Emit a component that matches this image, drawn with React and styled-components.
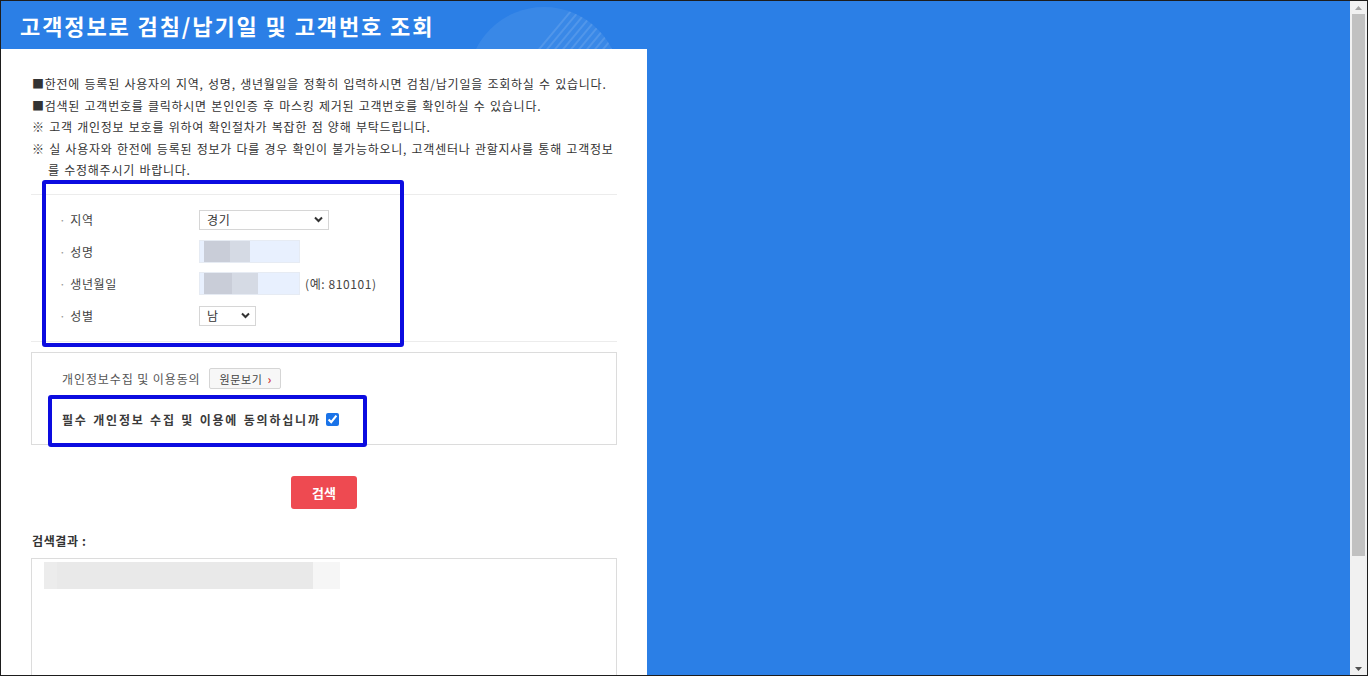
import React from 'react';
import styled, { createGlobalStyle } from 'styled-components';

const Global = createGlobalStyle`
  html, body {
    margin: 0;
    padding: 0;
    overflow: hidden;
  }
  body {
    font-family: "Noto Sans CJK KR", "Noto Sans", sans-serif;
  }
`;

const Frame = styled.div`
  display: flex;
  width: 1368px;
  height: 676px;
  box-sizing: border-box;
  border: 1px solid #1d1d1d;
  background: #2b7fe6;
  overflow: hidden;
`;

const Main = styled.div`
  flex: 1;
  display: flex;
  flex-direction: column;
  min-width: 0;
`;

const Header = styled.header`
  position: relative;
  flex-shrink: 0;
  width: 646px;
  height: 48px;
  display: flex;
  align-items: center;
  padding-left: 19px;
  box-sizing: border-box;
  overflow: hidden;
`;

const Title = styled.h1`
  margin: 0;
  color: #fff;
  font-size: 22px;
  font-weight: 700;
  letter-spacing: 1.9px;
  position: relative;
  z-index: 1;
`;

const Deco = styled.svg`
  position: absolute;
  left: 465px;
  top: 4px;
`;

const Panel = styled.div`
  position: relative;
  width: 646px;
  flex: 1;
  background: #fff;
  padding: 24px 30px 0 30px;
  box-sizing: border-box;
  color: #333;
`;

const Notice = styled.ul`
  list-style: none;
  margin: 0;
  padding: 0 0 0 1px;
  font-size: 12px;
  line-height: 21.5px;
  letter-spacing: 0.75px;
  word-spacing: 1px;
  color: #333;
`;

const NoticeItem = styled.li`
  padding-left: ${({ $mark }) => ($mark === '※' ? '16px' : '0')};
  text-indent: ${({ $mark }) => ($mark === '※' ? '-16px' : '0')};
`;

const Divider = styled.div`
  height: 1px;
  background: #ececec;
  margin-top: ${({ $top }) => $top}px;
`;

const Form = styled.div`
  display: flex;
  flex-direction: column;
  padding: 9px 0 9px 28px;
`;

const Row = styled.div`
  display: grid;
  grid-template-columns: 140px auto;
  align-items: center;
  height: 32px;
  font-size: 12px;
  letter-spacing: 0.6px;
  color: #444;
`;

const Label = styled.span`
  &::before {
    content: '·';
    color: #999;
    margin-right: 4px;
  }
`;

const Field = styled.div`
  display: flex;
  align-items: center;
  gap: 5px;
`;

const SelectWrap = styled.div`
  position: relative;
  width: ${({ $w }) => $w}px;
  height: 20px;
  box-sizing: border-box;
  border: 1px solid #d6d6d6;
  background: #fff;
  display: flex;
  align-items: center;
  padding-left: 7px;
  font-size: 12px;
  color: #333;
  svg {
    position: absolute;
    right: 5px;
    top: 5px;
  }
`;

const MaskedInput = styled.div`
  width: 101px;
  height: 23px;
  box-sizing: border-box;
  border: 1px solid #e6ebf3;
  background: ${({ $a, $b }) => `linear-gradient(to right,
    #e8f0fe 0 4px,
    #c9cdd8 4px ${$a}px,
    #d5dae4 ${$a}px ${$b}px,
    #e8f0fe ${$b}px 100%)`};
`;

const Hint = styled.span`
  font-size: 12px;
  color: #444;
`;

const ConsentBox = styled.div`
  margin-top: 10px;
  border: 1px solid #dcdcdc;
  height: 93px;
  box-sizing: border-box;
  padding: 15px 0 0 30px;
  display: flex;
  flex-direction: column;
  gap: 10px;
`;

const ConsentLine = styled.div`
  display: flex;
  align-items: center;
  gap: 8px;
  font-size: 12px;
  letter-spacing: 0.9px;
  color: #555;
  height: 22px;
`;

const ViewButton = styled.button`
  height: 21px;
  padding: 0 8px 0 10px;
  border: 1px solid #d5d5d5;
  border-radius: 2px;
  background: #f7f7f7;
  font-family: inherit;
  font-size: 11px;
  letter-spacing: 0.6px;
  color: #444;
  display: flex;
  align-items: center;
  gap: 5px;
  span {
    color: #d23a3a;
    font-size: 12px;
    font-weight: 700;
  }
`;

const Agree = styled.label`
  display: flex;
  align-items: center;
  gap: 5px;
  font-size: 12px;
  font-weight: 700;
  color: #3a3a3a;
  letter-spacing: 1.8px;
  word-spacing: 1px;
  height: 40px;
  input {
    margin: 0;
    width: 13px;
    height: 13px;
    accent-color: #1a73e8;
  }
`;

const Actions = styled.div`
  display: flex;
  justify-content: center;
  padding: 31px 0 0 0;
`;

const SearchButton = styled.button`
  width: 66px;
  height: 33px;
  border: none;
  border-radius: 3px;
  background: #ee4a51;
  color: #fff;
  font-family: inherit;
  font-size: 13px;
  font-weight: 700;
`;

const ResultTitle = styled.h2`
  margin: 24px 0 0 1px;
  font-size: 12px;
  font-weight: 700;
  letter-spacing: 0.6px;
  color: #333;
  line-height: 16px;
`;

const ResultBox = styled.div`
  margin-top: 9px;
  border: 1px solid #dcdcdc;
  border-bottom: none;
  height: 140px;
  padding: 3px 12px;
`;

const Masked = styled.div`
  width: 296px;
  height: 27px;
  background: linear-gradient(to right,
    #ececec 0 13px,
    #e9e9e9 13px 269px,
    #f6f6f6 269px 100%);
`;

const Highlight = styled.div`
  position: absolute;
  left: ${({ $x }) => $x}px;
  top: ${({ $y }) => $y}px;
  width: ${({ $w }) => $w}px;
  height: ${({ $h }) => $h}px;
  box-sizing: border-box;
  border: 4px solid #0c0ce0;
  border-radius: 3px;
  pointer-events: none;
`;

const Scrollbar = styled.div`
  width: 17px;
  background: #f1f1f1;
  display: flex;
  flex-direction: column;
  align-items: center;
`;

const Arrow = styled.div`
  height: 13px;
  display: flex;
  align-items: center;
  justify-content: center;
`;

const Thumb = styled.div`
  width: 13px;
  height: 542px;
  background: #c1c1c1;
`;

const Track = styled.div`
  flex: 1;
`;

const Chevron = () => (
  <svg width="9" height="7" viewBox="0 0 9 7">
    <path d="M1 1.5 L4.5 5 L8 1.5" fill="none" stroke="#333" strokeWidth="2" />
  </svg>
);

const notices = [
  ['■', '한전에 등록된 사용자의 지역, 성명, 생년월일을 정확히 입력하시면 검침/납기일을 조회하실 수 있습니다.'],
  ['■', '검색된 고객번호를 클릭하시면 본인인증 후 마스킹 제거된 고객번호를 확인하실 수 있습니다.'],
  ['※', ' 고객 개인정보 보호를 위하여 확인절차가 복잡한 점 양해 부탁드립니다.'],
  ['※', ' 실 사용자와 한전에 등록된 정보가 다를 경우 확인이 불가능하오니, 고객센터나 관할지사를 통해 고객정보를 수정해주시기 바랍니다.'],
];

const App = () => {
  const [agree, setAgree] = React.useState(true);

  return (
    <>
      <Global />
      <Frame>
        <Main>
          <Header>
            <Deco width="170" height="60" viewBox="0 0 170 60">
              <defs>
                <clipPath id="circ">
                  <circle cx="78" cy="78" r="76" />
                </clipPath>
              </defs>
              <circle cx="78" cy="78" r="76" fill="rgba(255,255,255,0.07)" />
              <g clipPath="url(#circ)" stroke="rgba(255,255,255,0.12)" strokeWidth="2">
                {Array.from({ length: 12 }).map((_, i) => (
                  <line key={i} x1={60 + i * 8} y1="60" x2={110 + i * 8} y2="0" />
                ))}
              </g>
            </Deco>
            <Title>고객정보로 검침/납기일 및 고객번호 조회</Title>
          </Header>
          <Panel>
            <Notice>
              {notices.map(([mark, text], i) => (
                <NoticeItem key={i} $mark={mark}>
                  {mark}
                  {text}
                </NoticeItem>
              ))}
            </Notice>
            <Divider $top={13} />
            <Form>
              <Row>
                <Label>지역</Label>
                <Field>
                  <SelectWrap $w={130}>
                    경기
                    <Chevron />
                  </SelectWrap>
                </Field>
              </Row>
              <Row>
                <Label>성명</Label>
                <Field>
                  <MaskedInput $a={30} $b={50} />
                </Field>
              </Row>
              <Row>
                <Label>생년월일</Label>
                <Field>
                  <MaskedInput $a={32} $b={58} />
                  <Hint>(예: 810101)</Hint>
                </Field>
              </Row>
              <Row>
                <Label>성별</Label>
                <Field>
                  <SelectWrap $w={57}>
                    남
                    <Chevron />
                  </SelectWrap>
                </Field>
              </Row>
            </Form>
            <Divider $top={0} />
            <ConsentBox>
              <ConsentLine>
                개인정보수집 및 이용동의
                <ViewButton>
                  원문보기 <span>›</span>
                </ViewButton>
              </ConsentLine>
              <Agree>
                필수 개인정보 수집 및 이용에 동의하십니까
                <input type="checkbox" checked={agree} onChange={() => setAgree(!agree)} />
              </Agree>
            </ConsentBox>
            <Actions>
              <SearchButton>검색</SearchButton>
            </Actions>
            <ResultTitle>검색결과 :</ResultTitle>
            <ResultBox>
              <Masked />
            </ResultBox>
            <Highlight $x={41} $y={131} $w={362} $h={167} />
            <Highlight $x={47} $y={346} $w={319} $h={52} />
          </Panel>
        </Main>
        <Scrollbar>
          <Arrow>
            <svg width="7" height="4" viewBox="0 0 7 4"><path d="M0 4 L3.5 0 L7 4 Z" fill="#a3a3a3" /></svg>
          </Arrow>
          <Thumb />
          <Track />
          <Arrow>
            <svg width="7" height="4" viewBox="0 0 7 4"><path d="M0 0 L3.5 4 L7 0 Z" fill="#505050" /></svg>
          </Arrow>
        </Scrollbar>
      </Frame>
    </>
  );
};

export default App;
